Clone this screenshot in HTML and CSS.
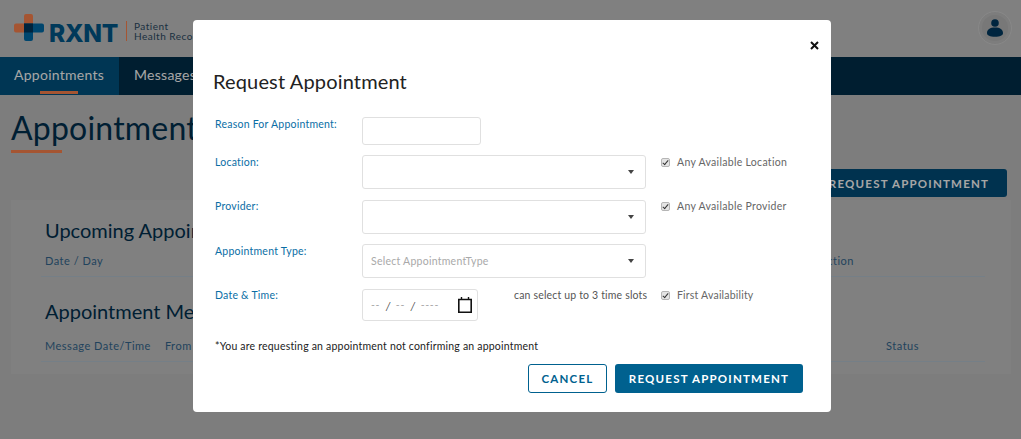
FILE: index.html
```html
<!DOCTYPE html>
<html lang="en">

<head>
    <meta charset="UTF-8">
    <meta name="viewport" content="width=device-width, initial-scale=1">
    <title>Patient Health Record - Appointments</title>
    <link rel="stylesheet" href="styles.css">
</head>

<body>

    <header class="topbar">
        <div class="brand">
            <svg class="brand-mark" width="30" height="28" viewBox="0 0 30 28">
                <path d="M10 2a2 2 0 0 1 2-2h5a2 2 0 0 1 2 2v16.500H2a2 2 0 0 1-2-2V11.500a2 2 0 0 1 2-2h8z" fill="#fe834d" />
                <path d="M10 9.500h18a2 2 0 0 1 2 2v5a2 2 0 0 1-2 2H19V25a2 2 0 0 1-2 2h-5a2 2 0 0 1-2-2z" fill="#006ca9" />
                <path d="M10 9.500h9v9h-9z" fill="#00385e" />
            </svg>
            <span class="brand-name">RXNT</span>
            <span class="brand-sub">Patient<br>Health Record</span>
        </div>
        <div class="avatar">
            <svg width="16" height="18" viewBox="0 0 16 18">
                <circle cx="8" cy="4" r="3.800" fill="#003a61" />
                <path d="M0 14c0-3.500 3-5.500 8-5.500s8 2 8 5.500c0 2.500-3 3.800-8 3.800s-8-1.300-8-3.800z" fill="#003a61" />
            </svg>
        </div>
    </header>

    <nav class="tabs">
        <a class="tab tab-active">Appointments</a>
        <a class="tab">Messages</a>
    </nav>

    <main class="content">
        <h1 class="page-title">Appointments</h1>
        <div class="page-actions">
            <button class="btn btn-primary btn-page">REQUEST APPOINTMENT</button>
        </div>
        <section class="panel">
            <h2>Upcoming Appointments</h2>
            <div class="col-row">
                <span>Date / Day</span>
                <span class="col-action">Action</span>
            </div>
            <h2 class="second">Appointment Messages</h2>
            <div class="col-row">
                <span class="col-msg">Message Date/Time</span>
                <span>From</span>
                <span class="col-status">Status</span>
            </div>
        </section>
    </main>

    <div class="overlay">
        <div class="modal">
            <div class="modal-close">
                <svg width="9" height="9" viewBox="0 0 9 9">
                    <path d="M1 1l7 7M8 1L1 8" stroke="#111" stroke-width="2" />
                </svg>
            </div>
            <h3 class="modal-title">Request Appointment</h3>

            <div class="form-row row-reason">
                <label>Reason For Appointment:</label>
                <div class="field field-short"></div>
            </div>

            <div class="form-row row-location">
                <label>Location:</label>
                <div class="field field-select"><span class="caret"></span></div>
                <div class="check"><span class="box"></span>Any Available Location</div>
            </div>

            <div class="form-row row-provider">
                <label>Provider:</label>
                <div class="field field-select"><span class="caret"></span></div>
                <div class="check"><span class="box"></span>Any Available Provider</div>
            </div>

            <div class="form-row row-type">
                <label>Appointment Type:</label>
                <div class="field field-select"><span class="placeholder">Select AppointmentType</span><span class="caret"></span></div>
            </div>

            <div class="form-row row-date">
                <label>Date &amp; Time:</label>
                <div class="field field-date">
                    <span class="date-text">--</span><span class="date-sep">/</span>
                    <span class="date-text">--</span><span class="date-sep">/</span>
                    <span class="date-text">----</span>
                    <svg class="date-icon" width="14" height="16" viewBox="0 0 14 16">
                        <path d="M0.800 2.500h12.400v12.700H0.800z" fill="none" stroke="#111" stroke-width="1.600" />
                        <path d="M3.500 0v3M10.500 0v3" stroke="#111" stroke-width="1.400" />
                    </svg>
                </div>
                <span class="slots">can select up to 3 time slots</span>
                <div class="check"><span class="box"></span>First Availability</div>
            </div>

            <p class="note">*You are requesting an appointment not confirming an appointment</p>

            <div class="modal-actions">
                <button class="btn btn-outline">CANCEL</button>
                <button class="btn btn-primary">REQUEST APPOINTMENT</button>
            </div>
        </div>
    </div>

</body>

</html>
```

FILE: styles.css
```css
* {
    box-sizing: border-box;
}

body {
    margin: 0;
    height: 439px;
    overflow: hidden;
    font-family: 'Lato', 'Open Sans', sans-serif;
    background: #c0c0c0;
    color: #222;
}

.topbar {
    height: 57px;
    padding: 14px 10px 0 14px;
    display: flex;
    justify-content: space-between;
    background: #c5c5c5;
}

.brand {
    display: flex;
    align-items: flex-start;
}

.brand-name {
    margin: 4px 0 0 5px;
    font-family: 'Inter', sans-serif;
    font-size: 24.500px;
    font-weight: 800;
    line-height: 30px;
    letter-spacing: -0.3px;
    color: #00588a;
}

.brand-sub {
    margin: 7px 0 0 8px;
    padding: 0 0 0 7px;
    height: 20px;
    border-left: 1px solid #fe834d;
    font-size: 10px;
    line-height: 10px;
    letter-spacing: 0.5px;
    color: #2b4a63;
    white-space: nowrap;
}

.avatar {
    width: 32px;
    height: 32px;
    margin-top: -2px;
    border-radius: 50%;
    border: 3px solid #c0c0c0;
    outline: 1px solid #d0d0d0;
    background: #b8b8b8;
    display: flex;
    align-items: center;
    justify-content: center;
}

.tabs {
    height: 38px;
    display: flex;
    background: #002e4a;
}

.tab {
    position: relative;
    padding: 0 15px;
    line-height: 36px;
    font-size: 14px;
    letter-spacing: 0.27px;
    color: #fff;
}

.tab-active {
    width: 119px;
    padding: 0 14px;
    background: #005381;
}

.tab-active::after {
    content: "";
    position: absolute;
    left: 40px;
    bottom: 1px;
    width: 38px;
    height: 3px;
    background: #fe834d;
}

.content {
    padding: 0 10px 0 11px;
}

.page-title {
    display: inline-block;
    position: relative;
    margin: 12px 0 0;
    font-size: 32px;
    font-weight: 400;
    letter-spacing: 0.2px;
    line-height: 41px;
    color: #00304f;
}

.page-title::after {
    content: "";
    position: absolute;
    left: 0;
    bottom: -5px;
    width: 51px;
    height: 3px;
    background: #fe834d;
}

.page-actions {
    display: flex;
    justify-content: flex-end;
    margin: 21px 4px 0 0;
    height: 28px;
}

.panel {
    height: 174px;
    margin-top: 3px;
    padding: 17px 26px 0 34px;
    background: #c5c5c5;
}

.panel h2 {
    margin: 0;
    font-size: 20px;
    font-weight: 400;
    line-height: 26px;
    color: #00304f;
    white-space: nowrap;
}

.panel h2.second {
    margin: 21px 0 4px;
}

.col-row {
    display: flex;
    height: 34px;
    margin-left: -4px;
    padding: 11px 4px 0;
    border-bottom: 1px solid #b4c4d0;
    font-size: 11px;
    letter-spacing: 0.5px;
    color: #34688f;
}

.col-msg {
    margin-right: 14px;
}

.col-action {
    margin-left: auto;
    margin-right: 127px;
}

.col-status {
    margin-left: auto;
    margin-right: 62px;
}

.overlay {
    position: fixed;
    inset: 0;
    padding: 20px 190px 0 193px;
    background: rgba(0, 0, 0, 0.35);
}

.modal {
    position: relative;
    height: 392px;
    padding: 0 22px;
    background: #fff;
    border-radius: 4px;
}

.modal-close {
    position: absolute;
    top: 21px;
    right: 12px;
    line-height: 0;
}

.modal-title {
    margin: 0 0 0 -2px;
    padding-top: 47px;
    font-size: 20px;
    font-weight: 400;
    line-height: 28px;
    letter-spacing: 0.15px;
    color: #222;
}

.form-row {
    display: flex;
    align-items: flex-start;
}

.form-row label {
    width: 147px;
    flex: none;
    font-size: 10.500px;
    line-height: 14px;
    letter-spacing: 0.23px;
    color: #0a6ea5;
}

.row-reason {
    margin-top: 22px;
}

.row-location {
    margin-top: 10px;
}

.row-provider {
    margin-top: 11px;
}

.row-type {
    margin-top: 10px;
}

.row-date {
    margin-top: 11px;
}

.row-provider label,
.row-provider .check,
.row-date label,
.row-date .check,
.slots {
    margin-top: -1px;
}

.field {
    position: relative;
    flex: none;
    border: 1px solid #e0e0e0;
    border-radius: 3px;
    background: #fff;
}

.field-short {
    width: 119px;
    height: 28px;
}

.field-select {
    width: 284px;
    height: 34px;
}

.field-date {
    width: 116px;
    height: 32px;
    display: flex;
    align-items: center;
    padding-left: 8px;
    gap: 5.500px;
}

.caret {
    position: absolute;
    top: 14px;
    right: 11px;
    border-left: 3.500px solid transparent;
    border-right: 3.500px solid transparent;
    border-top: 4px solid #444;
}

.placeholder {
    display: block;
    padding-left: 8px;
    font-size: 10.500px;
    line-height: 33px;
    letter-spacing: 0.25px;
    color: #a9a9a9;
}

.check {
    display: flex;
    align-items: center;
    margin-left: 15px;
    height: 14px;
    font-size: 10.500px;
    letter-spacing: 0.3px;
    color: #666;
}

.box {
    position: relative;
    width: 9px;
    height: 9px;
    margin-right: 7px;
    border: 1px solid #b5b5b5;
    border-radius: 2px;
    background: #e4e4e4;
}

.box::after {
    content: "";
    position: absolute;
    left: 2px;
    top: 0;
    width: 2px;
    height: 5px;
    border: solid #333;
    border-width: 0 1.500px 1.500px 0;
    transform: rotate(40deg);
}

.date-text {
    font-size: 10.500px;
    letter-spacing: 0.7px;
    color: #aaa;
}

.date-sep {
    font-size: 11px;
    font-style: italic;
    color: #444;
}

.date-icon {
    margin-left: auto;
    margin-right: 5px;
}

.slots {
    margin-left: 36px;
    width: 133px;
    flex: none;
    font-size: 10.500px;
    line-height: 14px;
    letter-spacing: 0.17px;
    color: #555;
    white-space: nowrap;
}

.row-date .check {
    margin-left: 14px;
    letter-spacing: 0.2px;
}

.note {
    margin: 18px 0 0;
    font-size: 10.500px;
    line-height: 14px;
    letter-spacing: 0.2px;
    color: #222;
}

.modal-actions {
    display: flex;
    justify-content: flex-end;
    gap: 8px;
    margin: 11px 6px 0 0;
}

.btn {
    height: 29px;
    border-radius: 3px;
    font-family: 'Lato', sans-serif;
    font-size: 11.500px;
    font-weight: 700;
    letter-spacing: 1.200px;
    cursor: pointer;
}

.btn-primary {
    width: 188px;
    border: none;
    background: #00618f;
    color: #fff;
}

.btn-page {
    width: 196px;
    height: 28px;
    background: #004d7a;
}

.btn-outline {
    width: 79px;
    border: 1px solid #00618f;
    background: #fff;
    color: #00618f;
}
```
